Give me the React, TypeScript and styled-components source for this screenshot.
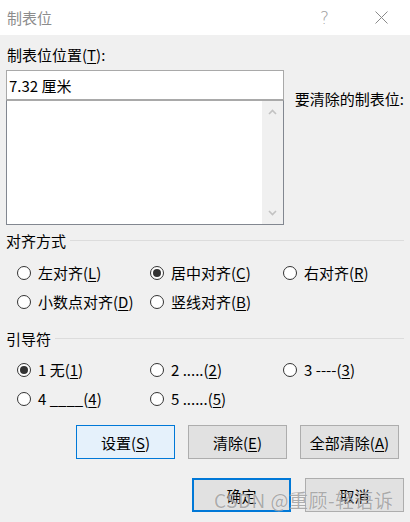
import styled, { createGlobalStyle } from "styled-components";

const Global = createGlobalStyle`
  html, body { margin: 0; padding: 0; }
  body {
    font-family: "Noto Sans CJK SC", "Noto Sans", sans-serif;
    background: #f0f0f0;
  }
`;

const Window = styled.div`
  position: relative;
  width: 410px;
  height: 522px;
  background: #f0f0f0;
  color: #000;
  font-size: 15px;
  overflow: hidden;
`;

const TitleBar = styled.div`
  height: 35px;
  background: #fff;
  display: flex;
  align-items: center;
  padding-left: 7px;
`;

const Title = styled.div`
  flex: 1;
  color: #8c8c8c;
  font-size: 15px;
  line-height: 20px;
`;

const TitleButton = styled.div`
  width: 57px;
  height: 35px;
  display: flex;
  align-items: center;
  justify-content: center;
  color: #a0a0a0;
  font-size: 17px;
  font-family: "DejaVu Sans", sans-serif;
  font-weight: 300;
`;

const Body = styled.div`
  padding: 10px 6px 0 6px;
  display: flex;
  flex-direction: column;
`;

const Label = styled.div`
  line-height: 20px;
  padding-left: 1px;
`;

const TopRow = styled.div`
  display: flex;
  align-items: flex-start;
  margin-top: 5px;
`;

const Field = styled.div`
  width: 279px;
  display: flex;
  flex-direction: column;
`;

const Input = styled.div`
  height: 30px;
  box-sizing: border-box;
  border: 1px solid #a9a9a9;
  background: #fff;
  padding: 0 0 0 2px;
  display: flex;
  align-items: center;
`;

const ListBox = styled.div`
  height: 125px;
  box-sizing: border-box;
  border: 1px solid #828790;
  border-top-color: #a9a9a9;
  background: #fff;
  display: flex;
  justify-content: flex-end;
`;

const ScrollBar = styled.div`
  width: 21px;
  background: #f0f0f0;
  display: flex;
  flex-direction: column;
  justify-content: space-between;
  align-items: center;
  padding: 8px 0 8px;
`;

const SideLabel = styled.div`
  margin: 19px 0 0 11px;
  line-height: 20px;
  white-space: nowrap;
`;

const GroupHead = styled.div<{ $mt: number }>`
  display: flex;
  align-items: center;
  gap: 4px;
  margin-top: ${(p) => p.$mt}px;
  line-height: 20px;
  &::after {
    content: "";
    flex: 1;
    height: 1px;
    background: #dcdcdc;
    margin-top: -1px;
  }
`;

const RadioGrid = styled.div<{ $mt: number }>`
  display: grid;
  grid-template-columns: 133px 133px 1fr;
  grid-auto-rows: 29px;
  margin-top: ${(p) => p.$mt}px;
  padding-left: 11px;
`;

const RadioItem = styled.div`
  display: flex;
  align-items: center;
  gap: 7px;
  white-space: nowrap;
`;

const Circle = styled.span<{ $on?: boolean }>`
  width: 14px;
  height: 14px;
  box-sizing: border-box;
  border-radius: 50%;
  border: 1px solid #333;
  background: #fff;
  display: flex;
  align-items: center;
  justify-content: center;
  &::after {
    content: "";
    display: ${(p) => (p.$on ? "block" : "none")};
    width: 8px;
    height: 8px;
    border-radius: 50%;
    background: #333;
  }
`;

const U = styled.span`
  text-decoration: underline;
  text-underline-offset: 2px;
`;

const ButtonRow = styled.div<{ $mt: number; $pr: number; $gap: number }>`
  display: flex;
  justify-content: flex-end;
  gap: ${(p) => p.$gap}px;
  margin-top: ${(p) => p.$mt}px;
  padding-right: ${(p) => p.$pr}px;
`;

const Button = styled.div<{ $focus?: boolean; $default?: boolean }>`
  width: 99px;
  height: 34px;
  box-sizing: border-box;
  display: flex;
  align-items: center;
  justify-content: center;
  background: ${(p) => (p.$focus ? "#e5f1fb" : "#e1e1e1")};
  border: ${(p) =>
    p.$default ? "2px solid #0078d7" : p.$focus ? "1px solid #0078d7" : "1px solid #adadad"};
`;

const Watermark = styled.div`
  position: absolute;
  left: 214px;
  top: 488px;
  font-size: 19px;
  line-height: 24px;
  letter-spacing: 0.5px;
  color: rgba(120, 120, 120, 0.6);
  text-shadow: 0 0 1px rgba(255, 255, 255, 0.8);
  white-space: nowrap;
  pointer-events: none;
`;

const Chevron = ({ up }: { up?: boolean }) => (
  <svg width="9" height="6" viewBox="0 0 9 6">
    <path
      d={up ? "M1 5 L4.5 1.5 L8 5" : "M1 1 L4.5 4.5 L8 1"}
      fill="none"
      stroke="#c2c2c2"
      strokeWidth="1.6"
    />
  </svg>
);

const Radio = ({ on, children }: { on?: boolean; children: React.ReactNode }) => (
  <RadioItem>
    <Circle $on={on} />
    <span>{children}</span>
  </RadioItem>
);

export default function App() {
  return (
    <Window>
      <Global />
      <TitleBar>
        <Title>制表位</Title>
        <TitleButton>?</TitleButton>
        <TitleButton>
          <svg width="13" height="13" viewBox="0 0 13 13">
            <path d="M0.5 0.5 L12.5 12.5 M12.5 0.5 L0.5 12.5" stroke="#8a8a8a" strokeWidth="1" />
          </svg>
        </TitleButton>
      </TitleBar>
      <Body>
        <Label>
          制表位位置(<U>T</U>):
        </Label>
        <TopRow>
          <Field>
            <Input>7.32 厘米</Input>
            <ListBox>
              <ScrollBar>
                <Chevron up />
                <Chevron />
              </ScrollBar>
            </ListBox>
          </Field>
          <SideLabel>要清除的制表位:</SideLabel>
        </TopRow>

        <GroupHead $mt={6}>对齐方式</GroupHead>
        <RadioGrid $mt={7}>
          <Radio>
            左对齐(<U>L</U>)
          </Radio>
          <Radio on>
            居中对齐(<U>C</U>)
          </Radio>
          <Radio>
            右对齐(<U>R</U>)
          </Radio>
          <Radio>
            小数点对齐(<U>D</U>)
          </Radio>
          <Radio>
            竖线对齐(<U>B</U>)
          </Radio>
        </RadioGrid>

        <GroupHead $mt={13}>引导符</GroupHead>
        <RadioGrid $mt={6}>
          <Radio on>
            1 无(<U>1</U>)
          </Radio>
          <Radio>
            2 .....(<U>2</U>)
          </Radio>
          <Radio>
            3 ----(<U>3</U>)
          </Radio>
          <Radio>
            4 ____(<U>4</U>)
          </Radio>
          <Radio>
            5 ......(<U>5</U>)
          </Radio>
        </RadioGrid>

        <ButtonRow $mt={12} $pr={5} $gap={13}>
          <Button $focus>
            设置(<U>S</U>)
          </Button>
          <Button>
            清除(<U>E</U>)
          </Button>
          <Button>
            全部清除(<U>A</U>)
          </Button>
        </ButtonRow>
        <ButtonRow $mt={19} $pr={0} $gap={14}>
          <Button $default>确定</Button>
          <Button>取消</Button>
        </ButtonRow>
      </Body>
      <Watermark>CSDN @重顾-轻语诉</Watermark>
    </Window>
  );
}
